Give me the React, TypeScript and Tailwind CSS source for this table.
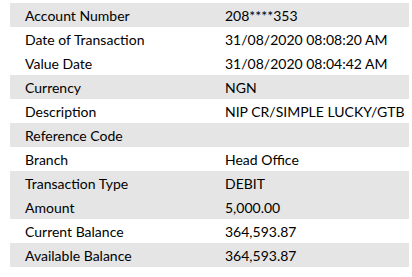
const rows: { label: string; value: string; shaded: boolean }[] = [
  { label: 'Account Number', value: '208****353', shaded: true },
  { label: 'Date of Transaction', value: '31/08/2020 08:08:20 AM', shaded: false },
  { label: 'Value Date', value: '31/08/2020 08:04:42 AM', shaded: false },
  { label: 'Currency', value: 'NGN', shaded: true },
  { label: 'Description', value: 'NIP CR/SIMPLE LUCKY/GTB', shaded: false },
  { label: 'Reference Code', value: '', shaded: true },
  { label: 'Branch', value: 'Head Office', shaded: false },
  { label: 'Transaction Type', value: 'DEBIT', shaded: true },
  { label: 'Amount', value: '5,000.00', shaded: true },
  { label: 'Current Balance', value: '364,593.87', shaded: false },
  { label: 'Available Balance', value: '364,593.87', shaded: true },
];

export default function App() {
  return (
    <div className="w-[412px] h-[277px] bg-white pt-[3px] pl-[10px] pr-[3px] font-['Lato',sans-serif] text-[14px] text-black">
      {rows.map((row) => (
        <div
          key={row.label}
          className={`flex h-6 items-center ${row.shaded ? 'bg-[#e5e5e5]' : 'bg-white'}`}
        >
          <span className="w-[215px] pl-[15px] whitespace-nowrap">{row.label}</span>
          <span className="whitespace-nowrap">{row.value}</span>
        </div>
      ))}
    </div>
  );
}
